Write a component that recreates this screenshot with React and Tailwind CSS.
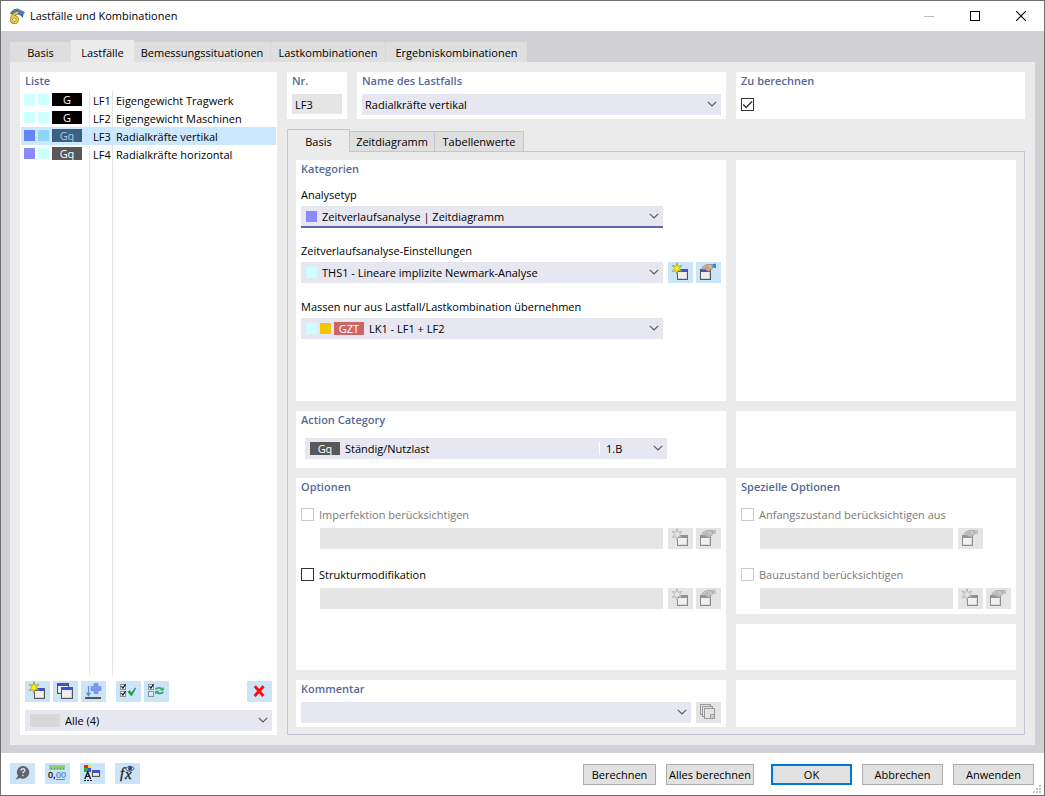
import React from "react";

const STAR = "M9 .8 L10.2 4.4 L13.8 3.4 L11.4 6.5 L13.8 9.6 L10.2 8.6 L9 12.2 L7.8 8.6 L4.2 9.6 L6.6 6.5 L4.2 3.4 L7.8 4.4 Z";

function Win({ x, y, w = 11, h = 11, off }) {
  return (
    <g>
      <rect x={x + 0.5} y={y + 0.5} width={w - 1} height={h - 1} fill={off ? "#f0f0f0" : "#eeeeee"} stroke={off ? "#8c8c8c" : "#555555"} />
      <rect x={x + 1} y={y + (off ? 0 : 0)} width={w - 2} height="3" fill={off ? "#939393" : "#3c50dc"} />
      <path d={`M${x + 1} ${y + h - 1.5}h${w - 2} M${x + w - 1.5} ${y + 4}v${h - 6}`} stroke={off ? "#dadada" : "#d2d2d2"} />
    </g>
  );
}

function Svg({ children }) {
  return (
    <svg width="25" height="21" viewBox="0 0 25 21" fill="none" aria-hidden="true" className="block">
      {children}
    </svg>
  );
}

function NewIcon({ off }) {
  return (
    <Svg>
      <Win x={9} y={7} off={off} />
      <path d={STAR} fill={off ? "#e5e5e5" : "#fff200"} stroke={off ? "#a3a3a3" : "#8a8a3a"} strokeWidth="0.7" />
    </Svg>
  );
}

function EditIcon({ off }) {
  return (
    <Svg>
      <Win x={4} y={7} off={off} />
      <path d="M6 6.6 L6.4 5.2 Q9 2.6 12 2.4 L16 2.6 L16.6 6 L14.8 8 L12.8 9.8 L11.4 8.6 L10.2 8.6 L9.4 7.2 L7 7.4Z" fill={off ? "#c9c9c9" : "#dcb793"} stroke={off ? "#9a9a9a" : "#8c7864"} strokeWidth="0.7" />
      <path d="M8.6 6 L12 4.4 M10.4 7.6 L13 5.6 M12.4 8.8 L14.4 6.6" stroke={off ? "#999999" : "#94765a"} strokeWidth="0.7" />
      <path d="M14.6 2.2 L19.6 1.8 L19.8 6 L16.8 5.6Z" fill={off ? "#b0b0b0" : "#6ba0dc"} />
      <path d="M17 2 L19.6 1.8 L19.8 6 L18 5.8Z" fill={off ? "#c4c4c4" : "#3f74b8"} />
    </Svg>
  );
}

function CopyIcon() {
  return (
    <Svg>
      <Win x={4} y={2} w={12} h={11} />
      <Win x={8} y={6} w={12} h={12} />
    </Svg>
  );
}

function InsertIcon() {
  return (
    <Svg>
      <path d="M13 2.5h4v3h3v4h-3v3h-4v-3h-3v-4h3z" fill="#7d97f0" stroke="#6580de" strokeWidth="0.6" />
      <path d="M7.5 5v9 M5.5 11.6l2 3 2-3" stroke="#5b8fca" strokeWidth="1.3" />
      <path d="M4 17h16" stroke="#303030" strokeWidth="1.6" />
    </Svg>
  );
}

function MiniBox({ y, on }) {
  return (
    <g>
      <rect x="4.5" y={y + 0.5} width="5" height="5" fill={on ? "#ffffff" : "#dcebf7"} stroke="#8d9499" />
      {on && <path d={`M5.4 ${y + 2.2}l1.5 2 2.7-4`} stroke="#1c1c1c" strokeWidth="1.2" />}
    </g>
  );
}

function CheckAllIcon() {
  return (
    <Svg>
      <MiniBox y={3} on />
      <MiniBox y={10} on />
      <path d="M12 10.8l1.6-1.2 1.8 2.4 3.8-5 .6 0-4 7.4h-.9z" fill="#1ca04c" stroke="#1ca04c" strokeWidth="0.8" />
    </Svg>
  );
}

function ToggleIcon() {
  return (
    <Svg>
      <MiniBox y={3} on />
      <MiniBox y={10} />
      <path d="M11.4 8.4q2.8-2.6 6.4-.6 M19.4 10.8q-2.8 2.8-6.4.8" stroke="#3da568" strokeWidth="1.8" />
      <path d="M19.8 6v3.6h-4.4z M11.2 13.6v-3.8h4.2z" fill="#3da568" />
    </Svg>
  );
}

function DeleteIcon() {
  return (
    <Svg>
      <path d="M7.8 5.2l8.6 9.8 M16.6 5.2l-9 9.8" stroke="#ff0a0a" strokeWidth="2.8" />
    </Svg>
  );
}

function StackIcon() {
  return (
    <Svg>
      <g stroke="#9a9a9a" fill="#e5e5e5">
        <rect x="4.5" y="2.5" width="10" height="10" />
        <rect x="6.5" y="4.5" width="10" height="10" />
        <rect x="8.5" y="6.5" width="10" height="10" />
        <path d="M14.5 12.5h4v4h-4z M15.5 14.4l1 1 2-2.6" />
      </g>
    </Svg>
  );
}

function HelpIcon() {
  return (
    <Svg>
      <path d="M12.8 3a6.3 6.3 0 1 1-2.6 12L5.6 16.6 8 12.8A6.3 6.3 0 0 1 12.8 3z" fill="#606468" />
      <path d="M10.8 7.6q.2-1.9 2.1-1.9t2 1.6q0 1-1.2 1.6-.8.5-.8 1.4 M12.9 11.8v1.5" stroke="#d5e6f4" strokeWidth="1.4" />
    </Svg>
  );
}

function DecimalsIcon() {
  return (
    <Svg>
      <rect x="4" y="2" width="16" height="5" fill="#8fd27f" />
      <path d="M6.5 4.5v2M9.5 4.5v2M12.5 4.5v2M15.5 4.5v2M18.5 4.5v2" stroke="#5d9c52" />
      <path d="M11 16.5h9" stroke="#4f7fd6" />
      <text x="3" y="15" fontSize="9" fontFamily="Liberation Sans, sans-serif" fill="#1b1b1b" stroke="#1b1b1b" strokeWidth="0.3">
        0,
      </text>
      <text x="11" y="15" fontSize="9" fontFamily="Liberation Sans, sans-serif" fill="#4f7fd6" stroke="#4f7fd6" strokeWidth="0.2">
        00
      </text>
    </Svg>
  );
}

function DisplayIcon() {
  return (
    <Svg>
      <rect x="4" y="2" width="4" height="3" fill="#e8281f" />
      <rect x="8" y="2" width="3" height="3" fill="#f4e400" />
      <rect x="4" y="5" width="4" height="4" fill="#2ea83a" />
      <rect x="8" y="5" width="3" height="4" fill="#3b4fe0" />
      <path d="M4.8 16l2.9-7 2.9 7 M5.8 13.4h3.8" stroke="#1c1c1c" strokeWidth="1.4" />
      <path d="M4 17.5h8" stroke="#1c1c1c" strokeDasharray="2 1" />
      <Win x={12} y={7} w={8} h={7} />
    </Svg>
  );
}

function FormulaIcon() {
  return (
    <Svg>
      <g fontStyle="italic" fontFamily="Liberation Serif, serif" fill="#1c1c1c" stroke="#1c1c1c" strokeWidth="0.3">
        <text x="5" y="15" fontSize="15">f</text>
        <text x="10" y="16" fontSize="15">x</text>
      </g>
      <path d="M10.6 6q4-5.4 8.6-.4-4.4 5-8.6.4z" fill="#e3ebf7" stroke="#33407c" />
      <circle cx="15" cy="5.6" r="2" fill="#33407c" />
    </Svg>
  );
}

function AppIcon() {
  return (
    <svg width="16" height="16" viewBox="0 0 16 16" aria-hidden="true">
      <path d="M1 5.6 Q3.5 1 8.5 .6 L15.8 4 L14.4 6.6 L13.8 10 L11.6 7.6 L7 6 L2.6 6.4z" fill="#3d659f" />
      <path d="M2.6 4l9.6 3.6M4.4 2.4l9.6 3.6M7 1.2l7.8 3" stroke="#a5bfdf" strokeWidth="0.5" />
      <path d="M9 4.4 Q3 6.4 2.6 11 A2.9 3 0 1 0 5.6 8.6 Q3.8 8.8 2.8 10.4" fill="none" stroke="#7d641c" strokeWidth="3" />
      <path d="M9 4.4 Q3 6.4 2.6 11 A2.9 3 0 1 0 5.6 8.6 Q3.8 8.8 2.8 10.4" fill="none" stroke="#f6d02c" strokeWidth="1.9" />
    </svg>
  );
}

function Chevron() {
  return (
    <svg width="10" height="6" viewBox="0 0 10 6" fill="none" aria-hidden="true" className="pointer-events-none absolute right-1 top-[7px]">
      <path d="M.8 .8l4.2 4.2 4.2-4.2" stroke="#5a5a5a" strokeWidth="1.2" />
    </svg>
  );
}

function IconButton({ label, off, children }) {
  return (
    <button type="button" aria-label={label} disabled={off} className={off ? "h-[21px] w-[25px] shrink-0 bg-[#e5e5e5]" : "h-[21px] w-[25px] shrink-0 bg-[#cce4f7]"}>
      {children}
    </button>
  );
}

function Card({ title, className = "", children }) {
  return (
    <section className={`flex min-w-0 flex-col bg-white px-[5px] ${className}`}>
      {title && <h2 className="h-[18px] shrink-0 font-semibold leading-[18px] text-[#566a98]">{title}</h2>}
      {children}
    </section>
  );
}

function Combo({ id, label, value, className = "", children }) {
  return (
    <div className={`relative flex min-h-[21px] min-w-0 items-center bg-[#e7e7f1] ${className}`}>
      {children}
      <select id={id} aria-label={label} className="h-[21px] min-w-0 flex-1 appearance-none bg-transparent outline-none">
        <option>{value}</option>
      </select>
      <Chevron />
    </div>
  );
}

function Field({ id, label, children }) {
  return (
    <div className="h-14">
      <label htmlFor={id} className="mb-0.5 block h-[18px] leading-[18px]">
        {label}
      </label>
      <div className="flex">{children}</div>
    </div>
  );
}

function Check({ id, off, checked, label }) {
  return (
    <div className="flex h-[18px] items-start gap-[5px]">
      <span className="relative mt-0.5 h-[13px] w-[13px]">
        <input
          id={id}
          type="checkbox"
          disabled={off}
          defaultChecked={checked}
          aria-label={label ? undefined : "Zu berechnen"}
          className="peer block h-[13px] w-[13px] appearance-none border border-[#333333] bg-white disabled:border-[#cccccc]"
        />
        <svg width="13" height="13" viewBox="0 0 13 13" fill="none" aria-hidden="true" className="pointer-events-none absolute left-0 top-0 hidden peer-checked:block">
          <path d="M2.2 6.4l3 3 5.8-6" stroke="#333333" strokeWidth="1.4" />
        </svg>
      </span>
      {label && (
        <label htmlFor={id} className={off ? "text-[#7a7a7a]" : ""}>
          {label}
        </label>
      )}
    </div>
  );
}

function Option({ id, label, off, children }) {
  return (
    <div>
      <Check id={id} label={label} off={off} />
      <div className="mt-1 flex pl-[19px]">
        <select disabled aria-label={label} className="mr-[5px] h-[21px] min-w-0 flex-1 appearance-none bg-[#e5e5e5]" />
        <div className="flex gap-[3px]">{children}</div>
      </div>
    </div>
  );
}

function PushButton({ children, className }) {
  return (
    <button type="button" className={`h-[21px] whitespace-nowrap bg-[#e1e1e1] ${className}`}>
      {children}
    </button>
  );
}

const CASES = [
  { no: "LF1", name: "Eigengewicht Tragwerk", cat: "G", a: "bg-[#ccffff]", b: "bg-[#ccffff]", c: "bg-black text-white" },
  { no: "LF2", name: "Eigengewicht Maschinen", cat: "G", a: "bg-[#ccffff]", b: "bg-[#ccffff]", c: "bg-black text-white" },
  { no: "LF3", name: "Radialkräfte vertikal", cat: "Gq", a: "bg-[#6287f5]", b: "bg-[#8fd5f6]", c: "bg-[#3d607f] text-[#a3c8e6]", selected: true },
  { no: "LF4", name: "Radialkräfte horizontal", cat: "Gq", a: "bg-[#8a8aff]", b: "bg-[#ccffff]", c: "bg-[#585858] text-white" },
];

function CaseTable() {
  return (
    <table aria-label="Liste" className="flex w-full flex-1 flex-col">
      <tbody className="flex flex-1 flex-col">
        {CASES.map((r) => {
          const line = r.selected ? "border-r border-transparent" : "border-r border-[#e5e5e5]";
          return (
            <tr key={r.no} aria-selected={!!r.selected} className={r.selected ? "flex h-[18px] bg-[#cce8ff]" : "flex h-[18px]"}>
              <td className={`flex w-[69px] gap-[3px] p-0 pl-[3px] pt-[2px] ${line}`}>
                <span className={`mt-px h-[11px] w-[11px] ${r.a}`} />
                <span className={`mt-px h-[11px] w-[11px] ${r.b}`} />
                <span className={`h-[13px] w-[30px] overflow-hidden text-center leading-[14px] ${r.c}`}>{r.cat}</span>
              </td>
              <td className={`w-[23px] whitespace-nowrap p-0 pl-[3px] leading-5 ${line}`}>{r.no}</td>
              <td className="flex-1 whitespace-nowrap p-0 pl-[3px] leading-5">{r.name}</td>
            </tr>
          );
        })}
        <tr aria-hidden="true" className="flex flex-1">
          <td className="w-[69px] border-r border-[#e5e5e5] p-0" />
          <td className="w-[23px] border-r border-[#e5e5e5] p-0" />
          <td className="flex-1 p-0" />
        </tr>
      </tbody>
    </table>
  );
}

export default function App() {
  return (
    <div className="flex min-h-screen flex-col border border-[#6e6e6e] bg-white font-['Open_Sans','Noto_Sans',sans-serif] text-[11px] leading-[18px] text-black">
      <header className="flex h-[30px] shrink-0 items-center pl-2">
        <AppIcon />
        <h1 className="ml-[5px] flex-1">Lastfälle und Kombinationen</h1>
        <button type="button" aria-label="Minimieren" disabled className="flex h-full w-[46px] items-center justify-center">
          <svg width="11" height="11" viewBox="0 0 11 11" aria-hidden="true"><path d="M0 5.5h10" stroke="#bcbcbc" /></svg>
        </button>
        <button type="button" aria-label="Maximieren" className="flex h-full w-[46px] items-center justify-center">
          <svg width="10" height="10" viewBox="0 0 10 10" fill="none" aria-hidden="true"><rect x=".5" y=".5" width="9" height="9" stroke="#000" /></svg>
        </button>
        <button type="button" aria-label="Schließen" className="flex h-full w-[46px] items-center justify-center">
          <svg width="10" height="10" viewBox="0 0 10 10" aria-hidden="true"><path d="M0 0l10 10M10 0L0 10" stroke="#000" strokeWidth="1.1" /></svg>
        </button>
      </header>

      <div className="flex flex-1 flex-col bg-[#d1d0d5] px-[9px] pb-2 pt-[9px]">
        <nav role="tablist" className="flex h-[22px] shrink-0 items-end whitespace-nowrap">
          <button type="button" role="tab" className="h-5 w-[61px] bg-[#dfdfdf] pt-0.5">Basis</button>
          <button type="button" role="tab" aria-selected="true" className="h-[22px] w-[63px] bg-[#ebebeb] pt-1">Lastfälle</button>
          <button type="button" role="tab" className="h-5 w-[137px] border-r border-[#d6d6d6] bg-[#dfdfdf] pt-0.5">Bemessungssituationen</button>
          <button type="button" role="tab" className="h-5 w-[115px] border-r border-[#d6d6d6] bg-[#dfdfdf] pt-0.5">Lastkombinationen</button>
          <button type="button" role="tab" className="h-5 w-[141px] bg-[#dfdfdf] pt-0.5">Ergebniskombinationen</button>
        </nav>

        <main className="flex flex-1 gap-[10px] bg-[#ebebeb] p-[10px]">
          <section className="flex w-[257px] shrink-0 flex-col bg-white pb-1">
            <h2 className="h-[19px] shrink-0 px-[5px] font-semibold text-[#566a98]">Liste</h2>
            <div className="flex flex-1 flex-col px-px">
              <CaseTable />
            </div>
            <div className="mt-[5px] flex gap-[3px] px-[5px]">
              <IconButton label="Neu"><NewIcon /></IconButton>
              <IconButton label="Kopieren"><CopyIcon /></IconButton>
              <IconButton label="Einfügen"><InsertIcon /></IconButton>
              <div className="ml-[7px] flex flex-1 gap-[3px]">
                <IconButton label="Alle auswählen"><CheckAllIcon /></IconButton>
                <IconButton label="Auswahl umkehren"><ToggleIcon /></IconButton>
              </div>
              <IconButton label="Löschen"><DeleteIcon /></IconButton>
            </div>
            <div className="mt-2 px-[5px]">
              <Combo label="Filter" value="Alle (4)">
                <span className="ml-[5px] mr-[5px] h-[13px] w-[30px] bg-[#d8d8d8]" />
              </Combo>
            </div>
          </section>

          <div className="flex min-w-0 flex-1 flex-col">
            <div className="grid shrink-0 grid-cols-[439fr_289fr] gap-[10px]">
              <div className="flex gap-[10px]">
                <Card title="Nr." className="w-[60px] shrink-0 pb-1">
                  <input aria-label="Nr." readOnly value="LF3" className="mt-1 h-5 w-[50px] bg-[#e5e5e5] px-[3px] outline-none" />
                </Card>
                <Card title="Name des Lastfalls" className="flex-1 pb-1">
                  <Combo label="Name des Lastfalls" value="Radialkräfte vertikal" className="mt-1 pl-[3px]" />
                </Card>
              </div>
              <Card title="Zu berechnen" className="pb-1">
                <div className="mt-[6px]"><Check id="calc" checked /></div>
              </Card>
            </div>

            <div className="mt-[10px] flex shrink-0 items-end" role="tablist">
              <button type="button" role="tab" aria-selected="true" className="relative z-10 -mb-px h-[23px] w-[63px] border border-b-0 border-[#c4c4d2] bg-[#ebebeb] pt-0.5">Basis</button>
              <button type="button" role="tab" className="-mb-px h-[21px] w-[85px] border-b border-r border-t border-[#c4c4d2] bg-[#dfdfdf]">Zeitdiagramm</button>
              <button type="button" role="tab" className="-mb-px h-[21px] w-[89px] border-b border-r border-t border-[#c4c4d2] bg-[#dfdfdf]">Tabellenwerte</button>
            </div>

            <div className="grid flex-1 grid-cols-[430fr_280fr] grid-rows-[1fr_57px_192px_47px] gap-[10px] border border-[#c4c4d2] px-2 pb-[7px] pt-2">
              <Card title="Kategorien" className="min-h-[186px]">
                <div className="mt-2">
                  <Field id="typ" label="Analysetyp">
                    <Combo id="typ" value="Zeitverlaufsanalyse | Zeitdiagramm" className="mr-[58px] flex-1 pb-px shadow-[inset_0_-2px_0_#6464a8]">
                      <span className="ml-[5px] mr-[5px] h-[11px] w-[11px] bg-[#8a8aff]" />
                    </Combo>
                  </Field>
                  <Field id="ths" label="Zeitverlaufsanalyse-Einstellungen">
                    <Combo id="ths" value="THS1 - Lineare implizite Newmark-Analyse" className="mr-[5px] flex-1">
                      <span className="ml-[5px] mr-[5px] h-[11px] w-[11px] bg-[#ccffff]" />
                    </Combo>
                    <div className="flex gap-[3px]">
                      <IconButton label="Neu"><NewIcon /></IconButton>
                      <IconButton label="Bearbeiten"><EditIcon /></IconButton>
                    </div>
                  </Field>
                  <Field id="mass" label="Massen nur aus Lastfall/Lastkombination übernehmen">
                    <Combo id="mass" value="LK1 - LF1 + LF2" className="mr-[58px] flex-1">
                      <span className="ml-[5px] h-[11px] w-[11px] bg-[#ccffff]" />
                      <span className="ml-[3px] h-[11px] w-[11px] bg-[#f7c400]" />
                      <span className="ml-[3px] mr-[5px] h-[13px] w-[30px] bg-[#cc6666] text-center leading-[14px] text-white">GZT</span>
                    </Combo>
                  </Field>
                </div>
              </Card>
              <Card />

              <Card title="Action Category">
                <div className="ml-1 mr-[54px] mt-[9px] flex">
                  <div className="flex h-[21px] min-w-0 flex-1 items-center bg-[#e7e7f1]">
                    <span className="ml-[5px] mr-[5px] h-[13px] w-[30px] overflow-hidden bg-[#585858] text-center leading-[14px] text-white">Gq</span>
                    <select aria-label="Einwirkungskategorie" className="h-full min-w-0 flex-1 appearance-none bg-transparent outline-none">
                      <option>Ständig/Nutzlast</option>
                    </select>
                    <span className="h-[13px] w-px bg-white" />
                  </div>
                  <Combo label="Gruppe" value="1.B" className="w-[67px] pl-[6px]" />
                </div>
              </Card>
              <Card />

              <Card title="Optionen">
                <div className="mt-[10px] flex flex-col gap-[17px]">
                  <Option id="imp" label="Imperfektion berücksichtigen" off>
                    <IconButton label="Neu" off><NewIcon off /></IconButton>
                    <IconButton label="Bearbeiten" off><EditIcon off /></IconButton>
                  </Option>
                  <Option id="str" label="Strukturmodifikation">
                    <IconButton label="Neu" off><NewIcon off /></IconButton>
                    <IconButton label="Bearbeiten" off><EditIcon off /></IconButton>
                  </Option>
                </div>
              </Card>
              <div className="flex min-w-0 flex-col gap-[10px]">
                <Card title="Spezielle Optionen" className="pb-[5px]">
                  <div className="mt-[10px] flex flex-col gap-[17px]">
                    <Option id="anf" label="Anfangszustand berücksichtigen aus" off>
                      <IconButton label="Bearbeiten" off><EditIcon off /></IconButton>
                      <span className="w-[25px]" />
                    </Option>
                    <Option id="bau" label="Bauzustand berücksichtigen" off>
                      <IconButton label="Neu" off><NewIcon off /></IconButton>
                      <IconButton label="Bearbeiten" off><EditIcon off /></IconButton>
                    </Option>
                  </div>
                </Card>
                <Card className="flex-1" />
              </div>

              <Card title="Kommentar">
                <div className="mt-1 flex gap-[5px]">
                  <Combo label="Kommentar" value="" className="flex-1" />
                  <IconButton label="Kommentare" off><StackIcon /></IconButton>
                </div>
              </Card>
              <Card />
            </div>
          </div>
        </main>
      </div>

      <footer className="relative flex h-[42px] shrink-0 items-start gap-[10px] px-[10px] pl-[9px] pt-[10px]">
        <IconButton label="Hilfe"><HelpIcon /></IconButton>
        <IconButton label="Einheiten"><DecimalsIcon /></IconButton>
        <IconButton label="Anzeige"><DisplayIcon /></IconButton>
        <IconButton label="Formel"><FormulaIcon /></IconButton>
        <div className="mt-px flex flex-1 justify-end gap-[10px]">
          <PushButton className="w-[73px] border border-[#adadad]">Berechnen</PushButton>
          <PushButton className="mr-[7px] w-[88px] border border-[#adadad]">Alles berechnen</PushButton>
          <PushButton className="w-[81px] border-2 border-[#0078d7]">OK</PushButton>
          <PushButton className="w-[81px] border border-[#adadad]">Abbrechen</PushButton>
          <PushButton className="w-[81px] border border-[#adadad]">Anwenden</PushButton>
        </div>
        <svg width="8" height="8" viewBox="0 0 8 8" aria-hidden="true" className="absolute bottom-[2px] right-[3px]">
          <path d="M6 0h2v2h-2zM3 3h2v2h-2zM6 3h2v2h-2zM0 6h2v2h-2zM3 6h2v2h-2zM6 6h2v2h-2z" fill="#bfbfbf" />
        </svg>
      </footer>
    </div>
  );
}
